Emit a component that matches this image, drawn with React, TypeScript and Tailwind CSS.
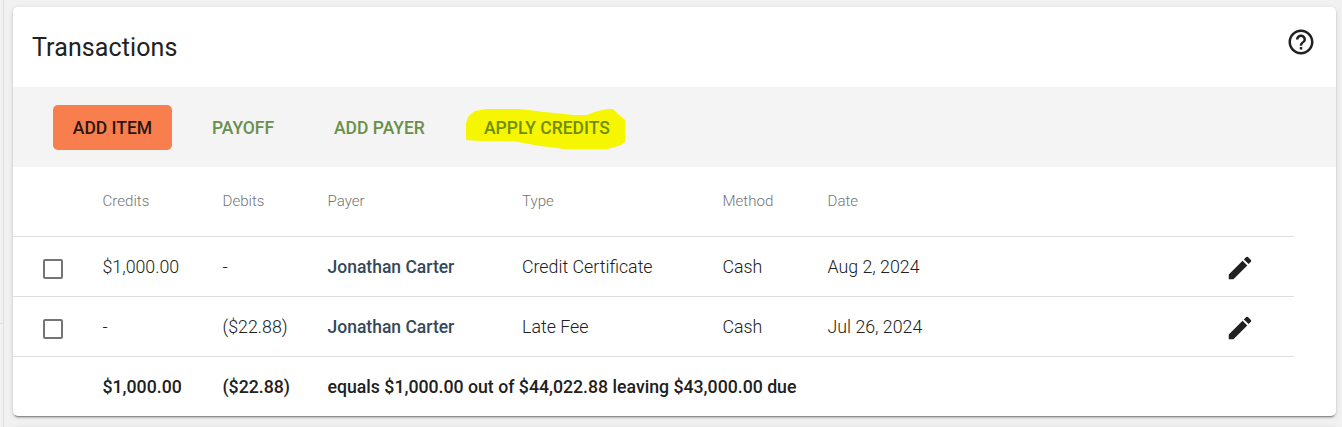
import React from "react";
import { MdEdit, MdHelpOutline } from "react-icons/md";

interface Transaction {
  credits: string;
  debits: string;
  payer: string;
  type: string;
  method: string;
  date: string;
}

const transactions: Transaction[] = [
  {
    credits: "$1,000.00",
    debits: "-",
    payer: "Jonathan Carter",
    type: "Credit Certificate",
    method: "Cash",
    date: "Aug 2, 2024",
  },
  {
    credits: "-",
    debits: "($22.88)",
    payer: "Jonathan Carter",
    type: "Late Fee",
    method: "Cash",
    date: "Jul 26, 2024",
  },
];

const rowClass =
  "grid w-[1281px] grid-cols-[89.5px_120px_105px_194.5px_200.5px_105px_1fr_95px] items-center";

function Toolbar() {
  return (
    <div className="flex h-20 items-center bg-[#f4f4f4] pt-0.5 pl-10 text-[17.5px] font-medium text-[#6a8f4b]">
      <button className="-mt-px h-[45px] w-[119px] rounded-[5px] bg-[#f87f4d] pt-0.5 text-[#2b1510]">ADD ITEM</button>
      <button className="ml-10 w-[62px] whitespace-nowrap text-left tracking-[-0.05px]">PAYOFF</button>
      <button className="ml-[60px] w-[91px] whitespace-nowrap text-left">ADD PAYER</button>
      <button className="relative ml-[59px] whitespace-nowrap text-left text-[#6f8d08]">
        <svg
          className="absolute top-1/2 left-[-18px] mt-[-19px] h-[41px] w-[160px]"
          viewBox="0 0 160 41"
          fill="#f6f600"
        >
          <path d="M0 14 L2 8 L6 4 L9 2 L20 0 H54 L63 1 L78 3 L94 4.500 L107 6 H121 L128 3 L141 0 H147 L151 4 L159 11 V33 L155 36 L149 38 L141 40 H98 L91 39 L74 37 L55 33.500 L45 32 H14 L0 31 Z" />
        </svg>
        <span className="relative">APPLY CREDITS</span>
      </button>
    </div>
  );
}

function TransactionRow({ item }: { item: Transaction }) {
  return (
    <div className={`${rowClass} h-[60px] border-b border-[#dedede] pt-0.5`}>
      <span className="mt-[3px] ml-[30px] size-5 rounded-[2px] border-2 border-[#757575]" />
      <span>{item.credits}</span>
      <span>{item.debits}</span>
      <span className="text-[17.5px] font-medium text-[#34495a]">{item.payer}</span>
      <span>{item.type}</span>
      <span>{item.method}</span>
      <span>{item.date}</span>
      <MdEdit className="mt-px ml-[25.5px] size-[30px] text-[#212121]" />
    </div>
  );
}

export default function App() {
  return (
    <div className="flex h-[427px] overflow-hidden bg-[#f1f1f1] font-['Roboto',sans-serif] text-[#212121]">
      <div className="flex w-1 shrink-0 flex-col border-r border-[#dedede]">
        <div className="h-[324px] border-b border-[#dedede]" />
      </div>
      <main className="flex flex-1 flex-col pt-[7px] pl-[9px]">
        <section className="h-[409px] w-[1323px] shrink-0 overflow-hidden rounded-[5px] bg-white shadow-[0_3px_1px_-2px_rgba(0,0,0,0.3),0_2px_2px_0_rgba(0,0,0,0.14),0_1px_5px_0_rgba(0,0,0,0.12)]">
          <header className="flex h-20 items-center justify-between px-5">
            <h1 className="-ml-px pt-0.5 text-[25px] tracking-[0.1px]">Transactions</h1>
            <MdHelpOutline className="mb-2.5 size-[30px]" />
          </header>
          <Toolbar />
          <div className="text-[17.8px] font-light">
            <div className={`${rowClass} h-[70px] border-b border-[#dedede] text-[15.1px] text-[#757575]`}>
              <span />
              <span>Credits</span>
              <span>Debits</span>
              <span>Payer</span>
              <span>Type</span>
              <span>Method</span>
              <span>Date</span>
            </div>
            {transactions.map((item) => (
              <TransactionRow key={item.date} item={item} />
            ))}
            <div className={`${rowClass} h-[60px] text-[17.7px] font-medium`}>
              <span />
              <span>$1,000.00</span>
              <span>($22.88)</span>
              <span className="whitespace-nowrap">
                equals $1,000.00 out of $44,022.88 leaving $43,000.00 due
              </span>
            </div>
          </div>
        </section>
        <div className="mt-[11px] h-4 w-[1323px] shrink-0 rounded-[5px] shadow-[0_1px_5px_0_rgba(0,0,0,0.12)]" />
      </main>
    </div>
  );
}
